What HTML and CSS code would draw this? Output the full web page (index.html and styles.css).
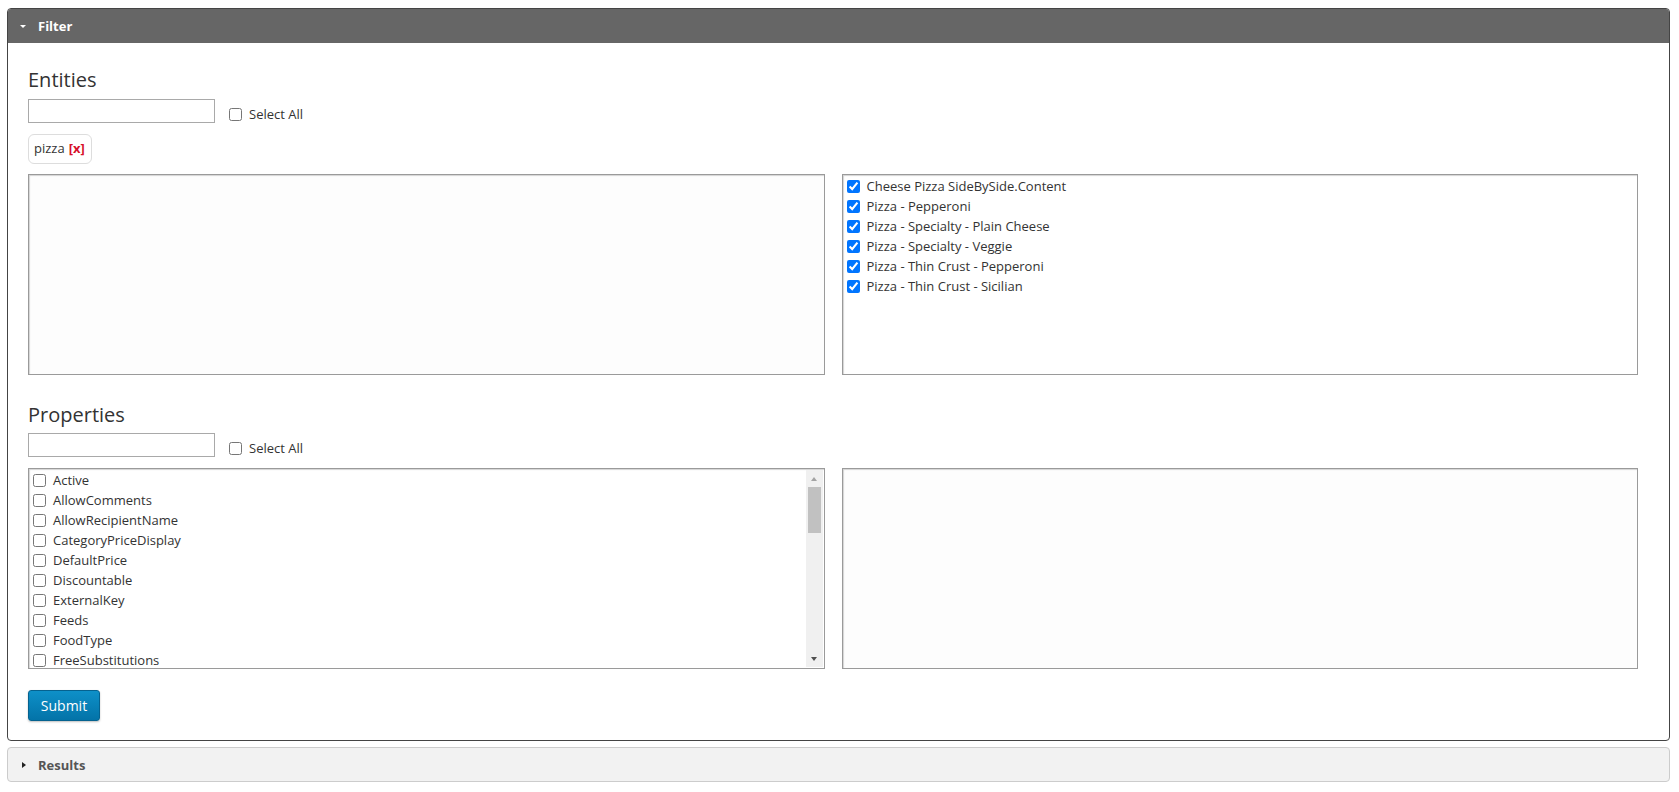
FILE: index.html
```html
<!DOCTYPE html>
<html lang="en">
<head>
<meta charset="utf-8">
<title>Filter</title>
<link rel="stylesheet" href="styles.css">
</head>
<body>
<div class="panel panel-open">
  <div class="panel-head"><span class="caret caret-down"></span>Filter</div>
  <div class="panel-body">
    <section class="group">
      <h2 class="group-title">Entities</h2>
      <div class="search-row">
        <input class="search" type="text">
        <label class="select-all"><input type="checkbox">Select All</label>
      </div>
      <div class="tags"><span class="tag">pizza <b class="tag-x">[x]</b></span></div>
      <div class="lists">
        <div class="listbox listbox-empty"></div>
        <div class="listbox">
          <div class="items">
            <label class="item"><input type="checkbox" checked>Cheese Pizza SideBySide.Content</label>
            <label class="item"><input type="checkbox" checked>Pizza - Pepperoni</label>
            <label class="item"><input type="checkbox" checked>Pizza - Specialty - Plain Cheese</label>
            <label class="item"><input type="checkbox" checked>Pizza - Specialty - Veggie</label>
            <label class="item"><input type="checkbox" checked>Pizza - Thin Crust - Pepperoni</label>
            <label class="item"><input type="checkbox" checked>Pizza - Thin Crust - Sicilian</label>
          </div>
        </div>
      </div>
    </section>
    <section class="group group-props">
      <h2 class="group-title">Properties</h2>
      <div class="search-row search-row-props">
        <input class="search" type="text">
        <label class="select-all"><input type="checkbox">Select All</label>
      </div>
      <div class="lists lists-props">
        <div class="listbox listbox-scroll">
          <div class="items">
            <label class="item"><input type="checkbox">Active</label>
            <label class="item"><input type="checkbox">AllowComments</label>
            <label class="item"><input type="checkbox">AllowRecipientName</label>
            <label class="item"><input type="checkbox">CategoryPriceDisplay</label>
            <label class="item"><input type="checkbox">DefaultPrice</label>
            <label class="item"><input type="checkbox">Discountable</label>
            <label class="item"><input type="checkbox">ExternalKey</label>
            <label class="item"><input type="checkbox">Feeds</label>
            <label class="item"><input type="checkbox">FoodType</label>
            <label class="item"><input type="checkbox">FreeSubstitutions</label>
          </div>
          <div class="scrollbar">
            <div class="sb-btn"><span class="sb-up"></span></div>
            <div class="sb-track"><div class="sb-thumb"></div></div>
            <div class="sb-btn"><span class="sb-down"></span></div>
          </div>
        </div>
        <div class="listbox listbox-empty"></div>
      </div>
    </section>
    <button class="btn-submit" type="button">Submit</button>
  </div>
</div>
<div class="panel panel-closed">
  <div class="panel-head-closed"><span class="caret caret-right"></span>Results</div>
</div>
</body>
</html>
```
FILE: styles.css
```css
* { box-sizing: border-box; }
html, body { margin: 0; padding: 0; background: #fff; }
body {
  font-family: "Open Sans", "Liberation Sans", sans-serif;
  font-size: 13px;
  color: #333;
}
.panel {
  margin: 8px 9px 0 7px;
  border-radius: 4px;
}
.panel-open {
  border: 1px solid #444;
  overflow: hidden;
}
.panel-head {
  height: 34px;
  background: #666;
  color: #fff;
  font-weight: 700;
  font-size: 13px;
  display: flex;
  align-items: center;
  padding-left: 12px;
}
.caret { display: inline-block; width: 0; height: 0; }
.caret-down {
  border-left: 3px solid transparent;
  border-right: 3px solid transparent;
  border-top: 3px solid #fff;
  margin-right: 12px;
}
.caret-right {
  border-top: 3.5px solid transparent;
  border-bottom: 3.5px solid transparent;
  border-left: 4px solid #222;
  margin-right: 12px;
}
.panel-body {
  padding: 23px 31px 19px 20px;
}
.group-title {
  margin: 0;
  font-size: 20px;
  line-height: 27px;
  font-weight: 400;
  color: #333;
}
.group-props { margin-top: 26px; }
.search-row {
  display: flex;
  align-items: flex-end;
  margin-top: 6px;
}
.search-row-props { margin-top: 5px; }
.search {
  width: 187px;
  height: 24px;
  border: 1px solid #a9a9a9;
  background: #fff;
  margin: 0;
  padding: 2px 4px;
  font: inherit;
}
.select-all {
  display: flex;
  align-items: center;
  gap: 7px;
  height: 18px;
  margin-left: 14px;
  font-size: 13px;
}
input[type="checkbox"] {
  width: 13px;
  height: 13px;
  margin: 0;
  flex: none;
}
.tags { margin-top: 11px; display: flex; }
.tag {
  display: inline-flex;
  align-items: center;
  height: 30px;
  padding: 0 6px 2px 5px;
  border: 1px solid #ddd;
  border-radius: 6px;
  color: #333;
}
.tag-x { color: #d7102a; margin-left: 4px; font-weight: 700; }
.lists {
  display: flex;
  gap: 17px;
  margin-top: 10px;
}
.lists-props { margin-top: 11px; }
.listbox {
  flex: 1;
  height: 201px;
  border: 1px solid #9a9a9a;
  box-shadow: inset 1px 1px 1px #d4d4d4;
  background: #fff;
  padding: 1px;
  overflow: hidden;
  display: flex;
}
.listbox-empty { background: #fdfdfd; }
.items {
  flex: 1;
  overflow: hidden;
  padding-left: 3px;
}
.item {
  display: flex;
  align-items: center;
  gap: 7px;
  height: 20px;
  white-space: nowrap;
  font-size: 13px;
}
.scrollbar {
  width: 17px;
  flex: none;
  background: #f0f0f0;
  display: flex;
  flex-direction: column;
}
.sb-btn {
  height: 17px;
  display: flex;
  align-items: center;
  justify-content: center;
}
.sb-up {
  width: 0; height: 0;
  border-left: 3.5px solid transparent;
  border-right: 3.5px solid transparent;
  border-bottom: 4px solid #a3a3a3;
}
.sb-down {
  width: 0; height: 0;
  border-left: 3.5px solid transparent;
  border-right: 3.5px solid transparent;
  border-top: 4px solid #505050;
}
.sb-track { flex: 1; padding: 0 2px; }
.sb-thumb { height: 46px; background: #c1c1c1; }
.btn-submit {
  display: block;
  margin-top: 21px;
  width: 72px;
  height: 31px;
  border: 1px solid #05628f;
  border-radius: 3px;
  background: linear-gradient(#0e90c8, #0373a8);
  box-shadow: 0 1px 2px rgba(0,0,0,.25);
  color: #fff;
  font-family: "Open Sans", "Liberation Sans", sans-serif;
  font-size: 14px;
  line-height: 29px;
  padding: 0;
}
.panel-closed {
  margin-top: 6px;
  height: 35px;
  border: 1px solid #ccc;
  background: #f2f2f2;
}
.panel-head-closed {
  height: 33px;
  display: flex;
  align-items: center;
  padding-left: 14px;
  font-weight: 700;
  color: #555;
  font-size: 13px;
}
```
